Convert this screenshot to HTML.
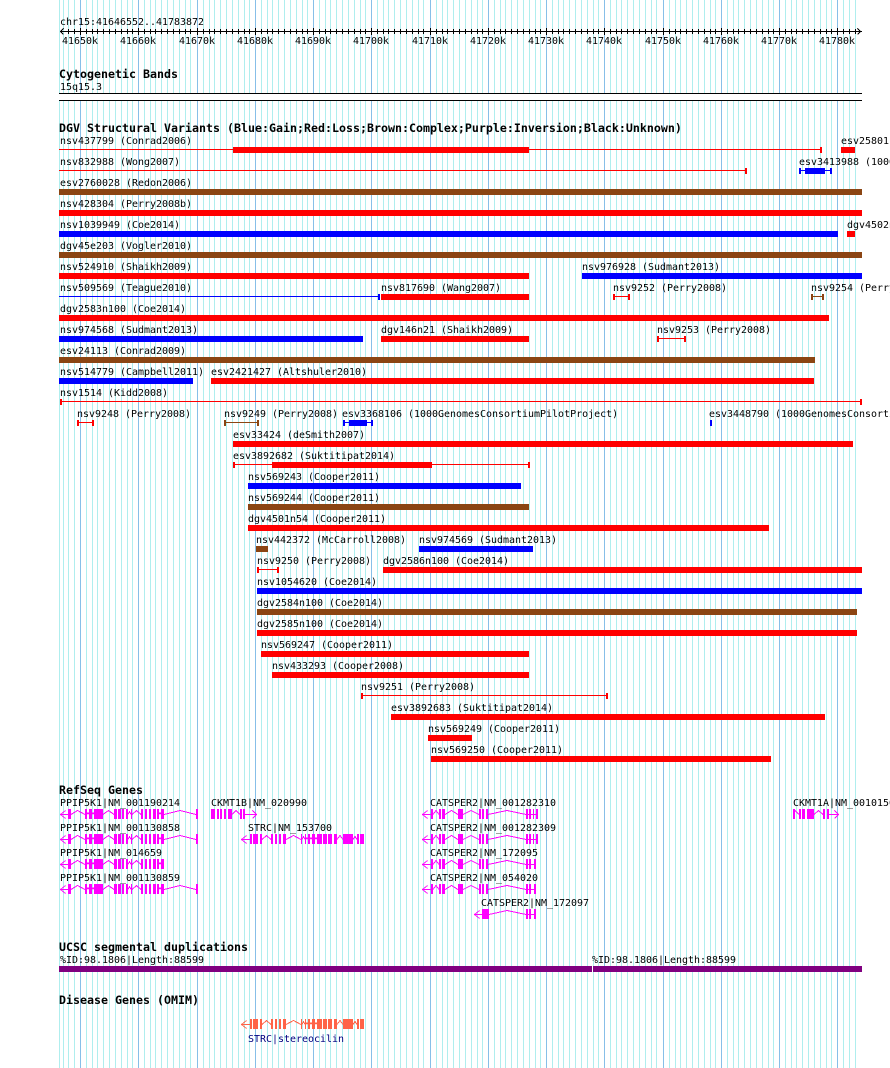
<!DOCTYPE html>
<html><head><meta charset="utf-8"><title>GBrowse</title>
<style>
html,body{margin:0;padding:0;background:#fff;width:890px;height:1068px;overflow:hidden}
svg{display:block;shape-rendering:crispEdges}
text{font-family:"DejaVu Sans Mono","Liberation Mono",monospace;font-size:9.97px;fill:#000;white-space:pre}
text.b{font-size:11.63px;font-weight:bold}
</style></head><body>
<svg xmlns="http://www.w3.org/2000/svg" width="890" height="1068" viewBox="0 0 890 1068">
<defs>
<path id="minor" fill="none" d="M59.5 0V1068M63.5 0V1068M68.5 0V1068M74.5 0V1068M86.5 0V1068M92.5 0V1068M97.5 0V1068M103.5 0V1068M109.5 0V1068M115.5 0V1068M121.5 0V1068M127.5 0V1068M132.5 0V1068M144.5 0V1068M150.5 0V1068M155.5 0V1068M161.5 0V1068M167.5 0V1068M173.5 0V1068M179.5 0V1068M185.5 0V1068M190.5 0V1068M203.5 0V1068M209.5 0V1068M214.5 0V1068M220.5 0V1068M226.5 0V1068M232.5 0V1068M238.5 0V1068M244.5 0V1068M249.5 0V1068M261.5 0V1068M267.5 0V1068M272.5 0V1068M278.5 0V1068M284.5 0V1068M290.5 0V1068M296.5 0V1068M302.5 0V1068M307.5 0V1068M319.5 0V1068M325.5 0V1068M330.5 0V1068M336.5 0V1068M342.5 0V1068M348.5 0V1068M354.5 0V1068M360.5 0V1068M365.5 0V1068M377.5 0V1068M383.5 0V1068M388.5 0V1068M394.5 0V1068M400.5 0V1068M406.5 0V1068M412.5 0V1068M418.5 0V1068M423.5 0V1068M436.5 0V1068M442.5 0V1068M447.5 0V1068M453.5 0V1068M459.5 0V1068M465.5 0V1068M471.5 0V1068M477.5 0V1068M482.5 0V1068M494.5 0V1068M500.5 0V1068M505.5 0V1068M511.5 0V1068M517.5 0V1068M523.5 0V1068M529.5 0V1068M535.5 0V1068M540.5 0V1068M552.5 0V1068M558.5 0V1068M563.5 0V1068M569.5 0V1068M575.5 0V1068M581.5 0V1068M587.5 0V1068M593.5 0V1068M598.5 0V1068M610.5 0V1068M616.5 0V1068M621.5 0V1068M627.5 0V1068M633.5 0V1068M639.5 0V1068M645.5 0V1068M651.5 0V1068M656.5 0V1068M669.5 0V1068M675.5 0V1068M680.5 0V1068M686.5 0V1068M692.5 0V1068M698.5 0V1068M704.5 0V1068M710.5 0V1068M715.5 0V1068M727.5 0V1068M733.5 0V1068M738.5 0V1068M744.5 0V1068M750.5 0V1068M756.5 0V1068M762.5 0V1068M768.5 0V1068M773.5 0V1068M785.5 0V1068M791.5 0V1068M796.5 0V1068M802.5 0V1068M808.5 0V1068M814.5 0V1068M820.5 0V1068M826.5 0V1068M831.5 0V1068M843.5 0V1068M849.5 0V1068M855.5 0V1068"/>
<path id="major" fill="none" d="M80.5 0V1068M138.5 0V1068M197.5 0V1068M255.5 0V1068M313.5 0V1068M371.5 0V1068M430.5 0V1068M488.5 0V1068M546.5 0V1068M604.5 0V1068M663.5 0V1068M721.5 0V1068M779.5 0V1068M837.5 0V1068"/>
<clipPath id="tk"><rect x="64" y="29" width="792" height="5"/></clipPath>
<clipPath id="tj"><rect x="64" y="28" width="792" height="7"/></clipPath>

<g id="ppx">
<path stroke="none" d="M68 0h3v10h-3zM85 0h2v10h-2zM89 0h3v10h-3zM94 0h9v10h-9zM114 0h3v10h-3zM118 0h3v10h-3zM122 0h2v10h-2zM126 0h2v10h-2zM131 0h1v10h-1zM141 0h2v10h-2zM145 0h2v10h-2zM149 0h2v10h-2zM153 0h3v10h-3zM157 0h2v10h-2zM161 0h3v10h-3z"/>
<path fill="none" d="M60.5 5.5H68M65.5 1.5L60.5 5.5L65.5 9.5M71 5.5L77.5 1.5L85 5.5M87 5.5L88 3.5L89 5.5M92 5.5L93 3.5L94 5.5M103 5.5L108.5 1.5L114 5.5M128 5.5L129.5 2.5L131 5.5M132 5.5L136.5 1.5L141 5.5M159 5.5L160 3.5L161 5.5"/>
</g>
<g id="pptail">
<path stroke="none" d="M196 0h2v10h-2z"/>
<path fill="none" d="M164 5.5L180 1.5L196 5.5"/>
</g>
<g id="strc">
<path stroke="none" d="M250 0h2v10h-2zM253 0h5v10h-5zM260 0h2v10h-2zM271 0h2v10h-2zM275 0h2v10h-2zM279 0h2v10h-2zM283 0h3v10h-3zM301 0h1v10h-1zM305 0h1v10h-1zM308 0h2v10h-2zM312 0h3v10h-3zM317 0h5v10h-5zM323 0h4v10h-4zM328 0h4v10h-4zM334 0h3v10h-3zM343 0h10v10h-10zM357 0h2v10h-2zM360 0h4v10h-4z"/>
<path fill="none" d="M241.5 5.5H250M246.5 1.5L241.5 5.5L246.5 9.5M262 5.5L266.5 1.5L271 5.5M286 5.5L293.5 1.5L301 5.5M302 5.5L303.5 2.5L305 5.5M306 5.5L307 3.5L308 5.5M310 5.5L311 3.5L312 5.5M315 5.5L316 3.5L317 5.5M337 5.5L340 1.5L343 5.5M353 5.5L355 2.5L357 5.5"/>
</g>
<g id="cat">
<path stroke="none" d="M431 0h2v10h-2zM439 0h2v10h-2zM442 0h3v10h-3zM458 0h5v10h-5zM479 0h2v10h-2zM482 0h2v10h-2zM486 0h2v10h-2zM526 0h2v10h-2zM529 0h2v10h-2zM534 0h2v10h-2z"/>
<path fill="none" d="M422.5 5.5H431M427.5 1.5L422.5 5.5L427.5 9.5M433 5.5L436 1.5L439 5.5M445 5.5L451.5 1.5L458 5.5M463 5.5L471 1.5L479 5.5M488 5.5L507 1.5L526 5.5M528 5.5H534"/>
</g>
<g id="catb">
<path stroke="none" d="M431 0h2v10h-2zM439 0h2v10h-2zM442 0h3v10h-3zM458 0h5v10h-5zM479 0h2v10h-2zM482 0h2v10h-2zM486 0h2v10h-2zM526 0h2v10h-2zM529 0h2v10h-2zM533 0h1v10h-1zM536 0h2v10h-2z"/>
<path fill="none" d="M422.5 5.5H431M427.5 1.5L422.5 5.5L427.5 9.5M433 5.5L436 1.5L439 5.5M445 5.5L451.5 1.5L458 5.5M463 5.5L471 1.5L479 5.5M488 5.5L507 1.5L526 5.5M528 5.5H536"/>
</g>
</defs>

<g stroke="#afeeee"><use href="#minor"/></g>
<g stroke="#87bfe8"><use href="#major"/></g>
<rect x="59" y="94" width="803" height="6" fill="#fff"/>

<!-- ruler -->
<rect x="60" y="31" width="802" height="1" fill="#000"/>
<g stroke="#000" clip-path="url(#tk)"><use href="#minor"/></g>
<g stroke="#000" clip-path="url(#tj)"><use href="#major"/></g>
<path fill="none" stroke="#000" d="M63.5 28.5L60.5 31.5L63.5 34.5M857.5 28.5L860.5 31.5L857.5 34.5"/>
<text x="60" y="25">chr15:41646552..41783872</text>
<text x="62" y="44">41650k</text><text x="120" y="44">41660k</text><text x="179" y="44">41670k</text><text x="237" y="44">41680k</text><text x="295" y="44">41690k</text><text x="353" y="44">41700k</text><text x="412" y="44">41710k</text><text x="470" y="44">41720k</text><text x="528" y="44">41730k</text><text x="586" y="44">41740k</text><text x="645" y="44">41750k</text><text x="703" y="44">41760k</text><text x="761" y="44">41770k</text><text x="819" y="44">41780k</text>

<text class="b" x="59" y="78">Cytogenetic Bands</text>
<text x="60" y="90">15q15.3</text>
<rect x="59" y="93" width="803" height="1" fill="#000"/>
<rect x="59" y="100" width="803" height="1" fill="#000"/>

<text class="b" x="59" y="132">DGV Structural Variants (Blue:Gain;Red:Loss;Brown:Complex;Purple:Inversion;Black:Unknown)</text>

<!-- red -->
<g fill="#f00">
<rect x="59" y="149" width="762" height="1"/><rect x="233" y="147" width="296" height="6"/><rect x="820" y="147" width="2" height="6"/>
<rect x="841" y="147" width="14" height="6"/>
<rect x="59" y="170" width="688" height="1"/><rect x="745" y="168" width="2" height="6"/>
<rect x="59" y="210" width="803" height="6"/>
<rect x="847" y="231" width="8" height="6"/>
<rect x="59" y="273" width="470" height="6"/>
<rect x="381" y="294" width="148" height="6"/>
<rect x="613" y="296" width="17" height="1"/><rect x="613" y="294" width="2" height="6"/><rect x="628" y="294" width="2" height="6"/>
<rect x="59" y="315" width="770" height="6"/>
<rect x="381" y="336" width="148" height="6"/>
<rect x="657" y="338" width="29" height="1"/><rect x="657" y="336" width="2" height="6"/><rect x="684" y="336" width="2" height="6"/>
<rect x="211" y="378" width="603" height="6"/>
<rect x="60" y="401" width="802" height="1"/><rect x="60" y="399" width="2" height="6"/><rect x="860" y="399" width="2" height="6"/>
<rect x="77" y="422" width="17" height="1"/><rect x="77" y="420" width="2" height="6"/><rect x="92" y="420" width="2" height="6"/>
<rect x="233" y="441" width="620" height="6"/>
<rect x="233" y="464" width="296" height="1"/><rect x="233" y="462" width="2" height="6"/><rect x="272" y="462" width="160" height="6"/><rect x="528" y="462" width="2" height="6"/>
<rect x="248" y="525" width="521" height="6"/>
<rect x="257" y="569" width="22" height="1"/><rect x="257" y="567" width="2" height="6"/><rect x="277" y="567" width="2" height="6"/>
<rect x="383" y="567" width="479" height="6"/>
<rect x="257" y="630" width="600" height="6"/>
<rect x="261" y="651" width="268" height="6"/>
<rect x="272" y="672" width="257" height="6"/>
<rect x="361" y="695" width="247" height="1"/><rect x="361" y="693" width="2" height="6"/><rect x="606" y="693" width="2" height="6"/>
<rect x="391" y="714" width="434" height="6"/>
<rect x="428" y="735" width="44" height="6"/>
<rect x="431" y="756" width="340" height="6"/>
</g>
<!-- blue -->
<g fill="#00f">
<rect x="799" y="170" width="33" height="1"/><rect x="799" y="168" width="2" height="6"/><rect x="805" y="168" width="20" height="6"/><rect x="830" y="168" width="2" height="6"/>
<rect x="59" y="231" width="779" height="6"/>
<rect x="582" y="273" width="280" height="6"/>
<rect x="59" y="296" width="320" height="1"/><rect x="378" y="294" width="2" height="6"/>
<rect x="59" y="336" width="304" height="6"/>
<rect x="59" y="378" width="134" height="6"/>
<rect x="343" y="422" width="30" height="1"/><rect x="343" y="420" width="2" height="6"/><rect x="349" y="420" width="18" height="6"/><rect x="371" y="420" width="2" height="6"/>
<rect x="710" y="420" width="2" height="6"/>
<rect x="248" y="483" width="273" height="6"/>
<rect x="419" y="546" width="114" height="6"/>
<rect x="257" y="588" width="605" height="6"/>
</g>
<!-- brown -->
<g fill="#8b4513">
<rect x="59" y="189" width="803" height="6"/>
<rect x="59" y="252" width="803" height="6"/>
<rect x="811" y="296" width="13" height="1"/><rect x="811" y="294" width="2" height="6"/><rect x="822" y="294" width="2" height="6"/>
<rect x="59" y="357" width="756" height="6"/>
<rect x="224" y="422" width="35" height="1"/><rect x="224" y="420" width="2" height="6"/><rect x="257" y="420" width="2" height="6"/>
<rect x="248" y="504" width="281" height="6"/>
<rect x="256" y="546" width="12" height="6"/>
<rect x="257" y="609" width="600" height="6"/>
</g>

<!-- labels -->
<text x="60" y="144">nsv437799 (Conrad2006)</text><text x="841" y="144">esv25801 (Conrad2006)</text>
<text x="60" y="165">nsv832988 (Wong2007)</text><text x="799" y="165">esv3413988 (1000GenomesConsortiumPilotProject)</text>
<text x="60" y="186">esv2760028 (Redon2006)</text>
<text x="60" y="207">nsv428304 (Perry2008b)</text>
<text x="60" y="228">nsv1039949 (Coe2014)</text><text x="847" y="228">dgv4502n100 (Coe2014)</text>
<text x="60" y="249">dgv45e203 (Vogler2010)</text>
<text x="60" y="270">nsv524910 (Shaikh2009)</text><text x="582" y="270">nsv976928 (Sudmant2013)</text>
<text x="60" y="291">nsv509569 (Teague2010)</text><text x="381" y="291">nsv817690 (Wang2007)</text><text x="613" y="291">nsv9252 (Perry2008)</text><text x="811" y="291">nsv9254 (Perry2008)</text>
<text x="60" y="312">dgv2583n100 (Coe2014)</text>
<text x="60" y="333">nsv974568 (Sudmant2013)</text><text x="381" y="333">dgv146n21 (Shaikh2009)</text><text x="657" y="333">nsv9253 (Perry2008)</text>
<text x="60" y="354">esv24113 (Conrad2009)</text>
<text x="60" y="375">nsv514779 (Campbell2011)</text><text x="211" y="375">esv2421427 (Altshuler2010)</text>
<text x="60" y="396">nsv1514 (Kidd2008)</text>
<text x="77" y="417">nsv9248 (Perry2008)</text><text x="224" y="417">nsv9249 (Perry2008)</text><text x="342" y="417">esv3368106 (1000GenomesConsortiumPilotProject)</text><text x="709" y="417">esv3448790 (1000GenomesConsortiumPilotProject)</text>
<text x="233" y="438">esv33424 (deSmith2007)</text>
<text x="233" y="459">esv3892682 (Suktitipat2014)</text>
<text x="248" y="480">nsv569243 (Cooper2011)</text>
<text x="248" y="501">nsv569244 (Cooper2011)</text>
<text x="248" y="522">dgv4501n54 (Cooper2011)</text>
<text x="256" y="543">nsv442372 (McCarroll2008)</text><text x="419" y="543">nsv974569 (Sudmant2013)</text>
<text x="257" y="564">nsv9250 (Perry2008)</text><text x="383" y="564">dgv2586n100 (Coe2014)</text>
<text x="257" y="585">nsv1054620 (Coe2014)</text>
<text x="257" y="606">dgv2584n100 (Coe2014)</text>
<text x="257" y="627">dgv2585n100 (Coe2014)</text>
<text x="261" y="648">nsv569247 (Cooper2011)</text>
<text x="272" y="669">nsv433293 (Cooper2008)</text>
<text x="361" y="690">nsv9251 (Perry2008)</text>
<text x="391" y="711">esv3892683 (Suktitipat2014)</text>
<text x="428" y="732">nsv569249 (Cooper2011)</text>
<text x="431" y="753">nsv569250 (Cooper2011)</text>

<!-- RefSeq -->
<text class="b" x="59" y="794">RefSeq Genes</text>
<text x="60" y="806">PPIP5K1|NM_001190214</text><text x="211" y="806">CKMT1B|NM_020990</text><text x="430" y="806">CATSPER2|NM_001282310</text><text x="793" y="806">CKMT1A|NM_001015001</text>
<text x="60" y="831">PPIP5K1|NM_001130858</text><text x="248" y="831">STRC|NM_153700</text><text x="430" y="831">CATSPER2|NM_001282309</text>
<text x="60" y="856">PPIP5K1|NM_014659</text><text x="430" y="856">CATSPER2|NM_172095</text>
<text x="60" y="881">PPIP5K1|NM_001130859</text><text x="430" y="881">CATSPER2|NM_054020</text>
<text x="481" y="906">CATSPER2|NM_172097</text>

<g fill="#f0f" stroke="#f0f">
<g transform="translate(0,809)"><use href="#ppx"/><use href="#pptail"/></g>
<g transform="translate(0,834)"><use href="#ppx"/><use href="#pptail"/></g>
<g transform="translate(0,859)"><use href="#ppx"/></g>
<g transform="translate(0,884)"><use href="#ppx"/><use href="#pptail"/></g>
<g transform="translate(0,834)"><use href="#strc"/></g>
<g transform="translate(0,809)"><use href="#catb"/></g>
<g transform="translate(0,834)"><use href="#catb"/></g>
<g transform="translate(0,859)"><use href="#cat"/></g>
<g transform="translate(0,884)"><use href="#cat"/></g>
<g transform="translate(0,909)">
<path stroke="none" d="M482 0h7v10h-7zM526 0h2v10h-2zM529 0h2v10h-2zM534 0h2v10h-2z"/>
<path fill="none" d="M474.5 5.5H482M479.5 1.5L474.5 5.5L479.5 9.5M489 5.5L507 1.5L526 5.5M528 5.5H534"/>
</g>
<g transform="translate(0,809)">
<path stroke="none" d="M211 0h4v10h-4zM217 0h2v10h-2zM220 0h2v10h-2zM224 0h2v10h-2zM228 0h4v10h-4zM240 0h2v10h-2zM243 0h2v10h-2z"/>
<path fill="none" d="M232 5.5L236 1.5L240 5.5M245 5.5H256.5M252.5 1.5L256.5 5.5L252.5 9.5"/>
</g>
<g transform="translate(0,809)">
<path stroke="none" d="M793 0h2v10h-2zM799 0h2v10h-2zM802 0h3v10h-3zM807 0h7v10h-7zM823 0h2v10h-2zM827 0h2v10h-2z"/>
<path fill="none" d="M795 1.5L799 5.5M814 5.5L818.5 1.5L823 5.5M829 5.5H838.5M834.5 1.5L838.5 5.5L834.5 9.5"/>
</g>
</g>

<!-- segdup -->
<text class="b" x="59" y="951">UCSC segmental duplications</text>
<text x="60" y="963">%ID:98.1806|Length:88599</text><text x="592" y="963">%ID:98.1806|Length:88599</text>
<rect x="59" y="966" width="533" height="6" fill="#800080"/><rect x="593" y="966" width="269" height="6" fill="#800080"/>

<!-- OMIM -->
<text class="b" x="59" y="1004">Disease Genes (OMIM)</text>
<g fill="#ff6347" stroke="#ff6347" transform="translate(0,1019)"><use href="#strc"/></g>
<text x="248" y="1042" style="fill:#000080">STRC|stereocilin</text>
</svg>
</body></html>
